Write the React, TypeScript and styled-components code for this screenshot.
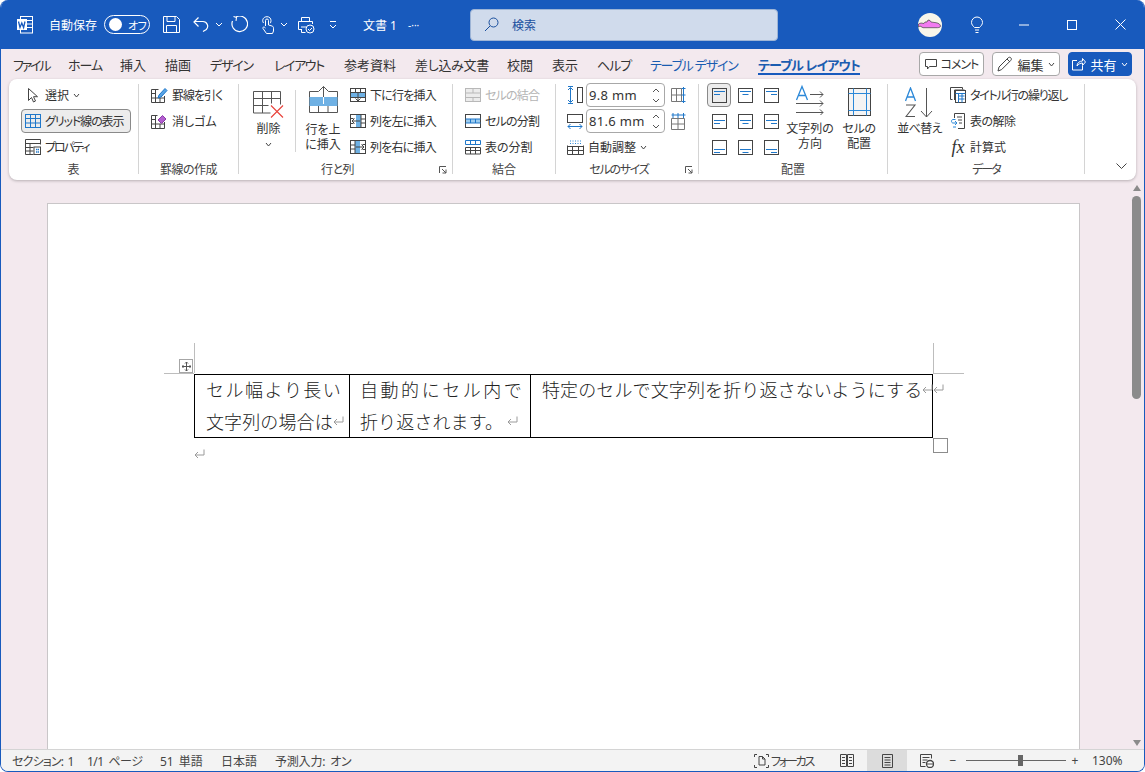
import React from "react";
import styled, { createGlobalStyle } from "styled-components";

const Global = createGlobalStyle`
  html, body { margin: 0; padding: 0; background: #fff; }
  body { font-family: "Noto Sans", "Noto Sans CJK JP", sans-serif; font-feature-settings: "palt"; color: #333; }
  * { box-sizing: border-box; }
`;

const BLUE = "#185abd";
const PINK = "#f3e9ee";
const LINE = "#1f77c9";
const BAND = "#6fb1e4";
const INK = "#444";

const Window = styled.div`
  width: 1145px; height: 772px; display: flex; flex-direction: column; overflow: hidden;
  background: ${PINK}; border: 1px solid ${BLUE}; border-top: 0; border-radius: 8px;
`;
const TitleBar = styled.div`
  height: 49px; flex: none; background: ${BLUE}; display: flex; align-items: center; color: #fff; padding-left: 16px;
  margin: 0 -1px;
`;
const TitleSlot = styled.div<{ $w: number; $gap?: number }>`
  width: ${p => p.$w}px; flex: none; display: flex; align-items: center; height: 100%; gap: ${p => p.$gap ?? 0}px;
`;
const TitleText = styled.span<{ $size?: number }>`
  font-size: ${p => p.$size ?? 12}px; white-space: nowrap; color: #fff;
`;
const Toggle = styled.div`
  width: 46px; height: 19px; border: 1px solid #fff; border-radius: 10px; display: flex; align-items: center;
  padding-left: 4px; gap: 6px; font-size: 11px; color: #fff; letter-spacing: -.5px; white-space: nowrap;
`;
const ToggleKnob = styled.span`
  width: 13px; height: 13px; border-radius: 50%; background: #fff; flex: none;
`;
const SearchBox = styled.div`
  width: 308px; flex: none; height: 32px; background: #d0dbec; border: 1px solid #9db4d6; border-radius: 4px; display: flex;
  align-items: center; padding-left: 13px; gap: 13px; font-size: 12px; color: #1a4f9e;
`;
const Avatar = styled.div`
  width: 24px; height: 24px; flex: none; border-radius: 50%; background: #f8f6ea; display: flex; align-items: center; justify-content: center;
`;
const WinBtn = styled.div<{ $w?: number }>`
  width: ${p => p.$w ?? 48}px; flex: none; height: 100%; display: flex; align-items: center; justify-content: center;
`;

const TabRow = styled.div`
  height: 30px; flex: none; display: flex; align-items: flex-start; padding-left: 12px; position: relative;
`;
const Tab = styled.div<{ $w: number; $ctx?: boolean; $active?: boolean; $ls?: number }>`
  width: ${p => p.$w}px; margin-right: 19px; flex: none; font-size: 13px; line-height: 18px; padding-top: 7px; height: 26px; white-space: nowrap;
  letter-spacing: ${p => p.$ls ?? 0}px;
  color: ${p => (p.$ctx ? "#1a5cb0" : "#333")};
  font-weight: ${p => (p.$active ? 700 : 400)};
  border-bottom: ${p => (p.$active ? `2px solid ${BLUE}` : "0")};
`;
const TabActions = styled.div`
  display: flex; gap: 8px; padding: 3px 0 0 0; margin-left: 40px;
`;
const ActionBtn = styled.div<{ $w: number; $primary?: boolean; $size?: number; $ls?: number }>`
  width: ${p => p.$w}px; height: 24px; border-radius: 4px; display: flex; align-items: center; justify-content: center; gap: 4px;
  font-size: ${p => p.$size ?? 13}px; letter-spacing: ${p => p.$ls ?? 0}px; white-space: nowrap; flex: none;
  color: ${p => (p.$primary ? "#fff" : "#333")};
  background: ${p => (p.$primary ? BLUE : "#fff")};
  border: 1px solid ${p => (p.$primary ? BLUE : "#a8a8a8")};
`;

const Ribbon = styled.div`
  height: 101px; flex: none; margin: 0 8px; background: #fff; border-radius: 8px; display: flex;
  box-shadow: 0 1px 3px rgba(0, 0, 0, .25);
`;
const Group = styled.div<{ $w: number }>`
  position: relative; width: ${p => p.$w}px; flex: none; display: flex; flex-direction: column; padding-top: 4px;
  &::after { content: ''; position: absolute; right: 0; top: 5px; bottom: 6px; width: 1px; background: #d4d4d4; }
`;
const GroupBody = styled.div<{ $pad?: number }>`
  height: 80px; flex: none; display: flex; padding-left: ${p => p.$pad ?? 0}px;
`;
const GroupLabel = styled.div<{ $ls?: number; $launch?: boolean }>`
  height: 17px; flex: none; text-align: center; font-size: 12px; line-height: 14px; color: #444; position: relative;
  padding-right: ${p => (p.$launch ? 17 : 1)}px; letter-spacing: ${p => p.$ls ?? 0}px;
`;
const Launcher = styled.span`
  position: absolute; right: 6px; top: 3px; display: flex;
`;
const Stack = styled.div<{ $w?: number; $ml?: number }>`
  display: flex; flex-direction: column; gap: 2px; margin-left: ${p => p.$ml ?? 0}px;
  ${p => (p.$w ? `width: ${p.$w}px; flex: none;` : "")}
`;
const Item = styled.div<{ $active?: boolean; $off?: boolean; $ls?: number; $flush?: boolean }>`
  height: 24px; flex: none; display: flex; align-items: center; gap: 4px; padding: 0 ${p => (p.$flush ? "4px 0 0" : "4px")}; border-radius: 4px; white-space: nowrap;
  font-size: 12px; letter-spacing: ${p => p.$ls ?? 0}px; color: ${p => (p.$off ? "#b4b4b4" : "#333")};
  ${p => (p.$active ? "background: #ececec; border: 1px solid #8a8a8a; padding: 0 3px;" : "")}
`;
const Big = styled.div<{ $w: number; $ls?: number }>`
  width: ${p => p.$w}px; flex: none; display: flex; flex-direction: column; align-items: center; font-size: 12px; line-height: 15px;
  color: #333; white-space: nowrap; text-align: center; letter-spacing: ${p => p.$ls ?? 0}px;
`;
const BigIcon = styled.div<{ $h: number; $mb: number }>`
  height: ${p => p.$h}px; display: flex; align-items: flex-end; justify-content: center; margin-bottom: ${p => p.$mb}px; flex: none;
`;
const BigChevron = styled.div`
  margin-top: 6px;
`;
const SubSep = styled.div`
  width: 1px; height: 62px; margin-top: 7px; background: #d4d4d4; flex: none;
`;
const Spin = styled.div`
  width: 79px; height: 24px; border: 1px solid #a8a8a8; border-radius: 4px; display: flex; align-items: center; justify-content: space-between;
  font-size: 13px; padding: 0 4px 0 2px; color: #333; letter-spacing: .3px; flex: none;
`;
const SizeRow = styled.div`
  display: flex; align-items: center; gap: 3px; height: 24px; flex: none;
`;
const SizeSide = styled.div`
  margin-left: 3px; display: flex;
`;
const AlignGrid = styled.div`
  display: grid; grid-template-columns: repeat(3, 26px); grid-auto-rows: 26px; width: 78px; flex: none;
`;
const AlignCell = styled.div<{ $on?: boolean }>`
  width: 24px; height: 24px; display: flex; align-items: center; justify-content: center; border-radius: 4px;
  ${p => (p.$on ? "background: #ececec; border: 1px solid #8a8a8a;" : "")}
`;
const FxGlyph = styled.span`
  width: 16px; text-align: center; font-family: "Liberation Serif", serif; font-style: italic; font-size: 18px; line-height: 18px; color: #333;
`;
const Collapse = styled.div`
  flex: 1; display: flex; align-items: flex-end; justify-content: flex-end; padding: 0 9px 10px 0;
`;

const Middle = styled.div`
  flex: 1; min-height: 0; display: flex; padding-top: 3px;
`;
const Canvas = styled.div`
  flex: 1; min-width: 0; overflow: hidden; padding: 20px 0 0 46px;
`;
const Page = styled.div`
  width: 1033px; height: 700px; background: #fff; border: 1px solid #c9c6c8; padding: 170px 0 0 146px; position: relative;
`;
const Guide = styled.span<{ $x: number; $y: number; $w: number; $h: number }>`
  position: absolute; left: ${p => p.$x}px; top: ${p => p.$y}px; width: ${p => p.$w}px; height: ${p => p.$h}px; background: #bdbdbd;
`;
const Handle = styled.span`
  position: absolute; left: 131px; top: 155px; width: 14px; height: 14px; border: 1px solid #a6a6a6; background: #fff; display: flex; align-items: center; justify-content: center;
`;
const Resize = styled.span`
  position: absolute; left: 885px; top: 234px; width: 15px; height: 15px; border: 1px solid #8c8c8c; background: #fff;
`;
const Table = styled.div`
  display: grid; grid-template-columns: 155px 181px 403px; width: 739px; height: 64px; border: 1px solid #000;
  font-family: "Noto Sans CJK JP", serif; font-weight: 300; font-size: 18px; color: #222; font-feature-settings: normal;
`;
const Cell = styled.div<{ $last?: boolean; $pl: number }>`
  padding: 0 8px 0 ${p => p.$pl}px; line-height: 32px; border-right: ${p => (p.$last ? "0" : "1px solid #000")};
`;
const Line = styled.div<{ $just?: boolean }>`
  display: flex; align-items: center; height: 32px; white-space: nowrap; letter-spacing: .12px;
  justify-content: ${p => (p.$just ? "space-between" : "flex-start")};
  &:first-child { margin-top: -2px; }
`;
const MarkGap = styled.span<{ $w: number }>`
  width: ${p => p.$w}px; flex: none;
`;
const Para = styled.div`
  height: 32px; padding: 11px 0 0 0; display: flex;
`;
const ScrollCol = styled.div`
  width: 15px; flex: none; display: flex; flex-direction: column; align-items: center; padding-top: 2px;
`;
const Thumb = styled.div`
  width: 9px; height: 203px; background: #8b8b8b; border-radius: 5px; margin-top: 5px;
`;
const ScrollSpacer = styled.div`
  flex: 1;
`;
const Arrow = styled.div<{ $down?: boolean }>`
  width: 0; height: 0; border-left: 4px solid transparent; border-right: 4px solid transparent;
  ${p => (p.$down ? "border-top: 6px solid #8b8b8b; margin-bottom: 3px;" : "border-bottom: 6px solid #8b8b8b;")}
`;
const Status = styled.div`
  height: 22px; flex: none; background: #f3f3f3; border-top: 1px solid #d4d4d4; display: flex; align-items: center; font-size: 12px; color: #444; padding-left: 11px;
`;
const StatusText = styled.span<{ $w: number; $ls?: number }>`
  width: ${p => p.$w}px; flex: none; white-space: nowrap; letter-spacing: ${p => p.$ls ?? 0}px; word-spacing: 2px;
`;
const StatusRight = styled.div`
  margin-left: auto; display: flex; align-items: center; height: 100%; padding-right: 20px;
`;
const ViewBtn = styled.div<{ $w: number; $on?: boolean }>`
  width: ${p => p.$w}px; height: 100%; display: flex; align-items: center; justify-content: center; flex: none;
  background: ${p => (p.$on ? "#dcdcdc" : "transparent")};
`;
const Focus = styled.div`
  display: flex; align-items: center; gap: 2px; width: 73px; flex: none; letter-spacing: -2.2px; white-space: nowrap; font-size: 12px;
`;
const Slider = styled.div`
  position: relative; width: 100px; height: 1px; background: #666; margin: 0 4px 0 7px; flex: none;
`;
const SliderThumb = styled.span`
  position: absolute; left: 52px; top: -5px; width: 5px; height: 11px; background: #666;
`;
const Zoom = styled.span`
  margin-left: 12px; width: 32px; flex: none;
`;

type IP = { w: number; h: number; children: React.ReactNode; stroke?: string };
const Ic = ({ w, h, children, stroke = INK }: IP) => (
  <svg width={w} height={h} viewBox={`0 0 ${w} ${h}`} fill="none" stroke={stroke} strokeWidth={1} style={{ display: "block", flex: "none" }}>
    {children}
  </svg>
);
const Chev = ({ c = INK, s = 6 }: { c?: string; s?: number }) => (
  <Ic w={s + 2} h={5} stroke={c}><path d={`M1 1 L${(s + 2) / 2} 4 L${s + 1} 1`} /></Ic>
);

const WordIcon = () => (
  <Ic w={18} h={18} stroke="none">
    <rect x="4.500" y=".5" width="12" height="16.500" stroke="#fff" />
    <path d="M10 4.500h6M10 8h6M10 11.500h6" stroke="#fff" />
    <rect x="1" y="3" width="10" height="11" fill="#fff" />
    <path d="M2.500 5.500l1.500 6 1.800-4.500 1.800 4.500 1.400-6" stroke={BLUE} strokeWidth="1.300" />
  </Ic>
);
const SaveIcon = () => (
  <Ic w={17} h={17} stroke="#fff">
    <path d="M.5.5h13l3 3v13H.5z" /><path d="M4 .5v5h8v-5M3.500 16.500v-7h10v7" />
  </Ic>
);
const UndoIcon = () => (
  <Ic w={16} h={17} stroke="#fff">
    <path d="M5.500 1.500L1 6l4.500 4.500" strokeWidth="1.200" />
    <path d="M1 6h9a4.700 4.700 0 0 1 3.300 8L10 16" strokeWidth="1.200" transform="translate(0 -.5)" />
  </Ic>
);
const RedoIcon = () => (
  <Ic w={17} h={17} stroke="#fff">
    <path d="M5 .5 A7.800 7.800 0 1 1 1.500 4.500" strokeWidth="1.200" transform="translate(0 .5)" />
    <path d="M2.500 .5L5.500 1.500L5 4.800" strokeWidth="1.100" />
  </Ic>
);
const TouchIcon = () => (
  <Ic w={17} h={18} stroke="#fff">
    <path d="M7.500 10V4.500a1.500 1.500 0 0 1 3 0V9l3.500 1c1.200.4 1.500 1.200 1.500 2.200V15l-1 2.500H8.500L5 12.500c-.6-1 .6-2 1.600-1.200L7.500 12" />
    <path d="M5.500 7C3.500 4 5.500 .7 9 .7c2.500 0 4 1.700 4 4 0 1-.3 2-.8 2.500" />
  </Ic>
);
const PrintIcon = () => (
  <Ic w={18} h={18} stroke="#fff">
    <path d="M4.500 5V1.500h8V5M4.500 13.500h-3v-8h14v2.500M4 11h5M4.500 13v3.500h4" />
    <circle cx="13" cy="13" r="4" /><path d="M11 13l1.500 1.500 2.500-2.500" />
  </Ic>
);
const QatMore = () => (
  <Ic w={8} h={8} stroke="#fff"><path d="M1 .5h6M1 4l3 3 3-3" /></Ic>
);
const SearchIcon = () => (
  <Ic w={15} h={15} stroke="#1a4f9e">
    <circle cx="9.500" cy="5.500" r="4.500" /><path d="M6 9l-5 5" />
  </Ic>
);
const SubmarineAvatar = () => (
  <Ic w={24} h={24} stroke="none">
    <path d="M.5 11L3 10l3 .5 1-1.500h2l1-2 2 .5 1 1.500 5 .7c3 .5 4.500 2 4.500 3.500 0 1-2 1.500-3 1.500H5L2 13 .5 14z" fill="#f27cf0" stroke="#444" strokeWidth=".7" />
  </Ic>
);
const Bulb = () => (
  <Ic w={14} h={17} stroke="#fff">
    <path d="M4.500 11.500C3 10 1.500 8.500 1.500 6.500a5.500 5.500 0 0 1 11 0c0 2-1.500 3.500-3 5z" /><path d="M5 14h4M5.500 16.500h3" />
  </Ic>
);
const CommentIcon = () => (
  <Ic w={12} h={12}><path d="M.5 1.500h11v7h-7l-2 2.500v-2.500h-2z" /></Ic>
);
const PenIcon = () => (
  <Ic w={16} h={16}><path d="M1 15l1-4 9-9c1-1 2-1 2.800-.2s.8 1.800-.2 2.800l-9 9z M10 3l3 3" /></Ic>
);
const ShareIcon = () => (
  <Ic w={14} h={14} stroke="#fff"><path d="M5 3.500H.5v9.500h10v-4M5 9c0-3 2.500-5 5.500-5V1.500l3 3.500-3 3.500V6c-2 0-4 1-5.500 3z" /></Ic>
);
const Cursor = () => (
  <Ic w={16} h={16}><path d="M3.500 1.500v12l3-3 2 4.500 2-1-2-4.300h4z" /></Ic>
);
const GridIc = () => (
  <Ic w={16} h={16} stroke={LINE}>
    <rect x=".5" y="1.500" width="15" height="13" /><path d="M5.500 1.500v13M10.500 1.500v13M.5 5.500h15M.5 10h15" />
  </Ic>
);
const PropsIc = () => (
  <Ic w={16} h={16}>
    <path d="M.5 .5h15v5M.5.5v15h8M.5 4.500h15M.5 8.500h8M.5 12h8M5 4.500v11" />
    <rect x="9" y="8" width="6.500" height="7.500" fill="#fff" /><path d="M11 10.500h1.500M13 10.500h1M11 13h1.500M13 13h1" stroke={LINE} strokeWidth="1.500" />
  </Ic>
);
const DrawIc = () => (
  <Ic w={17} h={17}>
    <path d="M.5 2.500v13h13V9M.5 2.500h7M.5 6.500h4M4.500 2.500v13M.5 11h13M9 11v4.500" />
    <path d="M7 11l1-3 6-6.500 2 2-6 6.500z" fill="#5aa5e6" stroke={LINE} />
  </Ic>
);
const EraseIc = () => (
  <Ic w={17} h={17}>
    <path d="M.5 2.500v13h13V9M.5 2.500h6M.5 6.500h4M4.500 2.500v13M.5 11h13M9 11v4.500" />
    <path d="M7 7l4.500-4.500 3.500 3.500-4.500 4.500z" fill="#b35fd0" stroke="#8a3aa8" />
  </Ic>
);
const DeleteIc = () => (
  <Ic w={31} h={27} stroke="#555">
    <path d="M.5 .5h27v13M.5 .5v21.500h17M.5 7.500h27M.5 14.500h15M9.500 .5v21.500M18.500 .5v12" />
    <path d="M18 14.500l12 12M30 14.500l-12 12" stroke="#e8423a" strokeWidth="1.100" />
  </Ic>
);
const InsertAboveIc = () => (
  <Ic w={29} h={27} stroke="#555">
    <path d="M.5 5.500h9M19.500 5.500h9v21H.5v-21M9.500 20v6.500M19 20v6.500" />
    <rect x=".5" y="11" width="28" height="9" fill={BAND} stroke="none" />
    <path d="M14.500 .5V11M9.500 5.500l5-5 5 5" />
    <path d="M14.500 11v7" stroke="#fff" />
  </Ic>
);
const RowBelow = () => (
  <Ic w={16} h={16}>
    <rect x="1" y="5" width="14" height="5" fill={BAND} stroke="none" />
    <rect x=".5" y="1.500" width="15" height="13" />
    <path d="M.5 5.500h15M5.500 1.500v4M10.500 1.500v4M.5 10.500h15" />
    <path d="M8 6v8M5.500 11.500L8 14l2.500-2.500" />
  </Ic>
);
const ColLeft = () => (
  <Ic w={16} h={16}>
    <rect x="6" y="2" width="5" height="12" fill={BAND} stroke="none" />
    <rect x=".5" y="1.500" width="15" height="13" />
    <path d="M11 1.500v13M11 6h4.500M11 10h4.500M.5 5.500h3M.5 10.500h3" />
    <path d="M10 8H2M4.500 5.500L2 8l2.500 2.500" />
  </Ic>
);
const ColRight = () => (
  <Ic w={16} h={16}>
    <rect x="5" y="2" width="5" height="12" fill={BAND} stroke="none" />
    <rect x=".5" y="1.500" width="15" height="13" />
    <path d="M5 1.500v13M.5 6H5M.5 10H5M12.500 5.500h3M12.500 10.500h3" />
    <path d="M6 8h8M11.500 5.500L14 8l-2.500 2.500" />
  </Ic>
);
const MergeIc = () => (
  <Ic w={16} h={16} stroke="#b8b8b8">
    <rect x=".5" y="1.500" width="15" height="13" fill="#ececec" />
    <path d="M.5 6h15M.5 10.500h15M8 1.500V6M8 10.500v4" />
  </Ic>
);
const SplitCell = () => (
  <Ic w={16} h={16}>
    <rect x=".5" y="1.500" width="15" height="13" />
    <rect x="1" y="6" width="14" height="4" fill="#9ccbee" stroke="none" />
    <path d="M.5 6h15M.5 10h15M5.500 6v4M10.500 6v4" stroke={LINE} />
  </Ic>
);
const SplitTable = () => (
  <Ic w={16} h={16}>
    <path d="M.5 1.500h15v4H.5zM5.500 1.500v4M10.500 1.500v4" stroke={LINE} />
    <path d="M.5 8.500h15v6.500H.5zM5.500 8.500V15M10.500 8.500V15M.5 11.500h15" />
  </Ic>
);
const HeightIc = () => (
  <Ic w={16} h={20}>
    <path d="M3.500 3v14M1 5l2.500-2.500L6 5M1 15l2.500 2.500L6 15M1 1.500h5M1 18.500h5" stroke={LINE} />
    <rect x="10.500" y="2.500" width="5" height="15" />
  </Ic>
);
const WidthIc = () => (
  <Ic w={16} h={18}>
    <rect x=".5" y="2.500" width="15" height="8" />
    <path d="M1 14.500h14M3.500 12L1 14.500 3.500 17M12.500 12l2.500 2.500-2.500 2.500" stroke={LINE} />
  </Ic>
);
const DistRows = () => (
  <Ic w={15} h={16}>
    <path d="M.5 1.500h10v13H.5zM.5 8h10M5.500 1.500v13" stroke="#777" />
    <path d="M12.500 0v16M10.500 1.500h4M10.500 8h4M10.500 14.500h4" stroke={LINE} />
  </Ic>
);
const DistCols = () => (
  <Ic w={15} h={19}>
    <path d="M.5 6.500h13v11H.5zM.5 12h13M7 6.500v11" stroke="#777" />
    <path d="M.5 3h14M2 1v5M7 1v5M12.500 1v5" stroke={LINE} />
  </Ic>
);
const AutoFit = () => (
  <Ic w={17} h={16}>
    <path d="M.5 6.500V15.500M16.500 6.500V15.500M.5 7.500h16M.5 11.500h16M.5 15.500h16M5.500 7.500v8M11.500 7.500v8" />
    <path d="M3 2h11M3 4.500h11" stroke="#2b88d8" strokeDasharray="1 1.500" />
  </Ic>
);
const LaunchIc = () => (
  <Ic w={8} h={8} stroke="#555"><path d="M.5 7V.5H7M3 3l4 4M3.500 7H7V3.500" /></Ic>
);
const AlignIc = ({ v, h }: { v: number; h: number }) => {
  const y = 3.5 + v * 3;
  const shortX = h === 0 ? 2 : h === 1 ? 4.5 : 7;
  return (
    <Ic w={15} h={15}>
      <rect x=".5" y=".5" width="14" height="14" />
      <path d={`M2 ${y}h11M${shortX} ${y + 3}h6`} stroke={LINE} />
    </Ic>
  );
};
const TextDirIc = () => (
  <Ic w={30} h={31} stroke="#555">
    <path d="M1.500 16L7 2.500 12.500 16M3.500 11.500h7" stroke="#2b88d8" strokeWidth="1.300" />
    <path d="M15 10.500h13M25 7.500l3 3-3 3M1 19.500h27M25 16.500l3 3-3 3M1 28.500h27M25 25.500l3 3-3 3" />
  </Ic>
);
const CellMarginIc = () => (
  <Ic w={23} h={28}>
    <rect x=".5" y=".5" width="22" height="27" fill="#f4f4f4" />
    <path d="M.5 5.500h22M.5 22.500h22M5.500 .5v27M18.500 .5v27" stroke="#2b88d8" />
  </Ic>
);
const SortIc = () => (
  <Ic w={29} h={31}>
    <path d="M.5 14L5.500 1 10.500 14M2.500 10h6" stroke="#2b88d8" strokeWidth="1.300" />
    <path d="M1 18h9L1 29.500h9" stroke="#555" strokeWidth="1.100" />
    <path d="M21.500 1v29M16 24l5.500 6 5.500-6" stroke="#555" />
  </Ic>
);
const RepeatIc = () => (
  <Ic w={16} h={16}>
    <path d="M2.500 12.500h-2V.5h12v2" /><path d="M4.500 13V3h10" /><rect x="5.500" y="3.500" width="10" height="12" fill="#fff" />
    <path d="M5.500 6.500h10M8.500 9h6M8.500 12h6M8.500 6.500v9M12 6.500v9" stroke={LINE} />
  </Ic>
);
const ConvertIc = () => (
  <Ic w={16} h={16}>
    <path d="M4.500 5V.5h10v15H8M7 4h5M8 7h4M9 10h3" />
    <path d="M5.500 6.500H3C1 6.500 1 10 3 10h4M5 8L7 10 5 12M6 14H3" stroke="#2b88d8" />
  </Ic>
);
const FocusIc = () => (
  <Ic w={15} h={14}><path d="M.5 3V.5H3M12 .5h2.500V3M.5 11v2.500H3M12 13.500h2.500V11M5 2.500h3.500L11 5v6H5zM8.500 2.500V5H11" /></Ic>
);
const ReadIc = () => (
  <Ic w={14} h={13}><path d="M.5 .5h6v12h-6zM7.500 .5h6v12h-6zM2 3.500h3M2 6.500h3M2 9.500h3M9 3.500h3M9 6.500h3M9 9.500h3" /></Ic>
);
const PrintViewIc = () => (
  <Ic w={11} h={14}><path d="M.5 .5h10v13H.5zM2.500 3.500h6M2.500 6h6M2.500 8.500h6M2.500 11h6" /></Ic>
);
const WebIc = () => (
  <Ic w={14} h={14}>
    <path d="M.5 .5h11v4M.5 .5v12h5M2.500 3.500h7M2.500 6h5M2.500 8.500h3" /><circle cx="10" cy="10" r="3.500" fill="#fff" strokeWidth="1.300" /><path d="M6.500 10h7" />
  </Ic>
);
const ReturnMark = ({ c = "#9a9a9a" }: { c?: string }) => (
  <Ic w={11} h={10} stroke={c}><path d="M10 .5v5.500H1M4 3L1 6l3 3" /></Ic>
);
const MoveIc = () => (
  <Ic w={9} h={9} stroke="#555"><path d="M4.500 0v9M0 4.500h9M3 1.500L4.500 0 6 1.500M3 7.500L4.500 9 6 7.500M1.500 3L0 4.500 1.500 6M7.500 3L9 4.500 7.500 6" /></Ic>
);
const SpinArrows = () => (
  <Ic w={8} h={19} stroke="#555"><path d="M1 6l3-3 3 3M1 13l3 3 3-3" /></Ic>
);

const tabs: [string, number, number][] = [["ファイル", 36, -2.2], ["ホーム", 33, -1], ["挿入", 26, 0], ["描画", 26, 0], ["デザイン", 45, -1.2], ["レイアウト", 51, -1.4], ["参考資料", 52, 0], ["差し込み文書", 73, -.3], ["校閲", 26, 0], ["表示", 26, 0], ["ヘルプ", 34, -1]];
const align = [[0, 0], [0, 1], [0, 2], [1, 0], [1, 1], [1, 2], [2, 0], [2, 1], [2, 2]];
const split = (s: string) => Array.from(s).map((c, i) => <span key={i}>{c}</span>);

export default function App() {
  return (
    <Window>
      <Global />
      <TitleBar>
        <TitleSlot $w={33}><WordIcon /></TitleSlot>
        <TitleSlot $w={55}><TitleText>自動保存</TitleText></TitleSlot>
        <TitleSlot $w={59}><Toggle><ToggleKnob /><span>オフ</span></Toggle></TitleSlot>
        <TitleSlot $w={30}><SaveIcon /></TitleSlot>
        <TitleSlot $w={38} $gap={6}><UndoIcon /><Chev c="#fff" /></TitleSlot>
        <TitleSlot $w={27}><RedoIcon /></TitleSlot>
        <TitleSlot $w={39} $gap={5}><TouchIcon /><Chev c="#fff" /></TitleSlot>
        <TitleSlot $w={32}><PrintIcon /></TitleSlot>
        <TitleSlot $w={34}><QatMore /></TitleSlot>
        <TitleSlot $w={45}><TitleText>文書 1</TitleText></TitleSlot>
        <TitleSlot $w={62}><TitleText $size={10}>-···</TitleText></TitleSlot>
        <SearchBox><SearchIcon /><span>検索</span></SearchBox>
        <TitleSlot $w={140} />
        <Avatar><SubmarineAvatar /></Avatar>
        <TitleSlot $w={11} />
        <WinBtn $w={47}><Bulb /></WinBtn>
        <WinBtn><Ic w={10} h={2} stroke="#fff"><path d="M0 1h10" /></Ic></WinBtn>
        <WinBtn><Ic w={10} h={10} stroke="#fff"><rect x=".5" y=".5" width="9" height="9" /></Ic></WinBtn>
        <WinBtn><Ic w={11} h={11} stroke="#fff"><path d="M.5 .5l10 10M10.500 .5l-10 10" /></Ic></WinBtn>
      </TitleBar>
      <TabRow>
        {tabs.map(([t, w, ls]) => <Tab key={t} $w={w} $ls={ls}>{t}</Tab>)}
        <Tab $w={89} $ctx $ls={-1.2}>テーブル デザイン</Tab>
        <Tab $w={102} $ctx $active $ls={-.9}>テーブル レイアウト</Tab>
        <TabActions>
          <ActionBtn $w={65} $size={12} $ls={-1}><CommentIcon />コメント</ActionBtn>
          <ActionBtn $w={68}><PenIcon />編集<Chev s={5} /></ActionBtn>
          <ActionBtn $w={64} $primary><ShareIcon />共有<Chev c="#fff" s={5} /></ActionBtn>
        </TabActions>
      </TabRow>
      <Ribbon>
        <Group $w={130}>
          <GroupBody $pad={12}>
            <Stack $w={110}>
              <Item><Cursor />選択<Chev s={5} /></Item>
              <Item $active $ls={-1.1}><GridIc />グリッド線の表示</Item>
              <Item $ls={-2}><PropsIc />プロパティ</Item>
            </Stack>
          </GroupBody>
          <GroupLabel>表</GroupLabel>
        </Group>
        <Group $w={100}>
          <GroupBody $pad={8}>
            <Stack>
              <Item $ls={-1}><DrawIc />罫線を引く</Item>
              <Item><EraseIc />消しゴム</Item>
            </Stack>
          </GroupBody>
          <GroupLabel $ls={-.5}>罫線の作成</GroupLabel>
        </Group>
        <Group $w={214}>
          <GroupBody $pad={3}>
            <Big $w={53}>
              <BigIcon $h={35} $mb={3}><DeleteIc /></BigIcon>
              削除
              <BigChevron><Chev s={5} /></BigChevron>
            </Big>
            <SubSep />
            <Big $w={54}>
              <BigIcon $h={30} $mb={9}><InsertAboveIc /></BigIcon>
              行を上<br />に挿入
            </Big>
            <Stack $ml={-4}>
              <Item $ls={-.8}><RowBelow />下に行を挿入</Item>
              <Item $ls={-.8}><ColLeft />列を左に挿入</Item>
              <Item $ls={-.8}><ColRight />列を右に挿入</Item>
            </Stack>
          </GroupBody>
          <GroupLabel $launch $ls={-.6}>行と列<Launcher><LaunchIc /></Launcher></GroupLabel>
        </Group>
        <Group $w={103}>
          <GroupBody $pad={8}>
            <Stack>
              <Item $off $ls={-.8}><MergeIc />セルの結合</Item>
              <Item $ls={-.8}><SplitCell />セルの分割</Item>
              <Item><SplitTable />表の分割</Item>
            </Stack>
          </GroupBody>
          <GroupLabel>結合</GroupLabel>
        </Group>
        <Group $w={143}>
          <GroupBody $pad={11}>
            <Stack>
              <SizeRow><HeightIc /><Spin>9.8 mm<SpinArrows /></Spin><SizeSide><DistRows /></SizeSide></SizeRow>
              <SizeRow><WidthIc /><Spin>81.6 mm<SpinArrows /></Spin><SizeSide><DistCols /></SizeSide></SizeRow>
              <Item $flush><AutoFit />自動調整<Chev s={5} /></Item>
            </Stack>
          </GroupBody>
          <GroupLabel $launch $ls={-1.3}>セルのサイズ<Launcher><LaunchIc /></Launcher></GroupLabel>
        </Group>
        <Group $w={189}>
          <GroupBody $pad={8}>
            <AlignGrid>
              {align.map(([v, h], i) => <AlignCell key={i} $on={i === 0}><AlignIc v={v} h={h} /></AlignCell>)}
            </AlignGrid>
            <Big $w={50}>
              <BigIcon $h={32} $mb={6}><TextDirIc /></BigIcon>
              文字列の<br />方向
            </Big>
            <Big $w={48} $ls={-.3}>
              <BigIcon $h={33} $mb={5}><CellMarginIc /></BigIcon>
              セルの<br />配置
            </Big>
          </GroupBody>
          <GroupLabel>配置</GroupLabel>
        </Group>
        <Group $w={197}>
          <GroupBody $pad={5}>
            <Big $w={53} $ls={-.6}>
              <BigIcon $h={35} $mb={3}><SortIc /></BigIcon>
              並べ替え
            </Big>
            <Stack>
              <Item $ls={-1.2}><RepeatIc />タイトル行の繰り返し</Item>
              <Item $ls={-.5}><ConvertIc />表の解除</Item>
              <Item><FxGlyph>fx</FxGlyph>計算式</Item>
            </Stack>
          </GroupBody>
          <GroupLabel $ls={-2}>データ</GroupLabel>
        </Group>
        <Collapse><Ic w={11} h={7}><path d="M.5 .5l5 5 5-5" /></Ic></Collapse>
      </Ribbon>
      <Middle>
        <Canvas>
          <Page>
            <Guide $x={146} $y={139} $w={1} $h={30} />
            <Guide $x={885} $y={139} $w={1} $h={30} />
            <Guide $x={116} $y={169} $w={30} $h={1} />
            <Guide $x={885} $y={169} $w={31} $h={1} />
            <Handle><MoveIc /></Handle>
            <Resize />
            <Table>
              <Cell $pl={11}>
                <Line $just>{split("セル幅より長い")}</Line>
                <Line>文字列の場合は<ReturnMark /></Line>
              </Cell>
              <Cell $pl={10}>
                <Line $just>{split("自動的にセル内で")}</Line>
                <Line>折り返されます。<MarkGap $w={4} /><ReturnMark /></Line>
              </Cell>
              <Cell $last $pl={11}>
                <Line>特定のセルで文字列を折り返さないようにする<ReturnMark /><ReturnMark /></Line>
              </Cell>
            </Table>
            <Para><ReturnMark /></Para>
          </Page>
        </Canvas>
        <ScrollCol>
          <Arrow />
          <Thumb />
          <ScrollSpacer />
          <Arrow $down />
        </ScrollCol>
      </Middle>
      <Status>
        <StatusText $w={75} $ls={-.8}>セクション: 1</StatusText>
        <StatusText $w={73} $ls={-.5}>1/1 ページ</StatusText>
        <StatusText $w={61}>51 単語</StatusText>
        <StatusText $w={54}>日本語</StatusText>
        <StatusText $w={90} $ls={-.2}>予測入力: オン</StatusText>
        <StatusRight>
          <Focus><FocusIc />フォーカス</Focus>
          <ViewBtn $w={40}><ReadIc /></ViewBtn>
          <ViewBtn $w={40} $on><PrintViewIc /></ViewBtn>
          <ViewBtn $w={40}><WebIc /></ViewBtn>
          <ViewBtn $w={12}>−</ViewBtn>
          <Slider><SliderThumb /></Slider>
          <ViewBtn $w={10}>+</ViewBtn>
          <Zoom>130%</Zoom>
        </StatusRight>
      </Status>
    </Window>
  );
}
